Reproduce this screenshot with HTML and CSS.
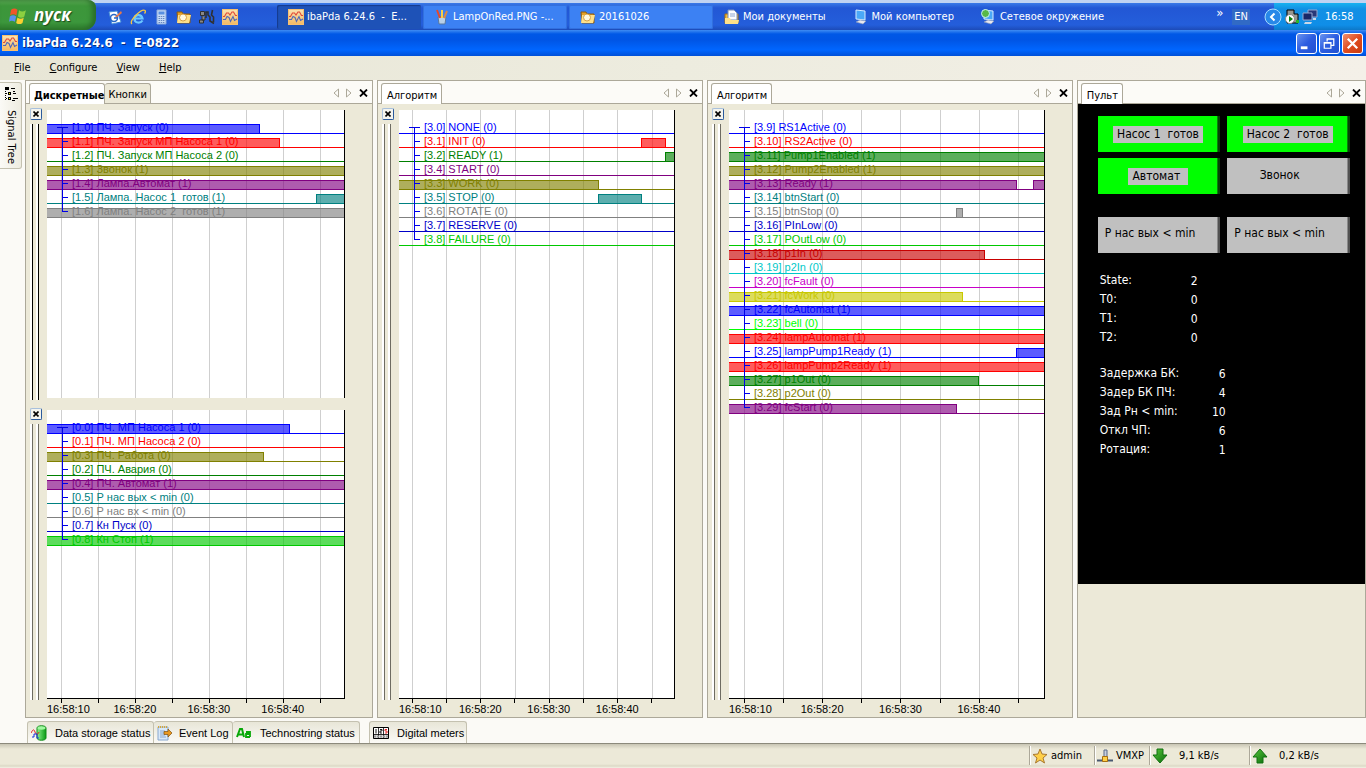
FILE: index.html
```html
<!DOCTYPE html>
<html lang="ru">
<head>
<meta charset="utf-8">
<title>ibaPda 6.24.6 - E-0822</title>
<link rel="stylesheet" href="styles.css">
</head>
<body>
<svg class="defs" aria-hidden="true">
  <defs>
    <linearGradient id="gold" x1="0" y1="0" x2="0" y2="1"><stop offset="0" stop-color="#fbe3b0"/><stop offset="1" stop-color="#f3b964"/></linearGradient>
    <linearGradient id="leaf" x1="0" y1="0" x2="1" y2="0"><stop offset="0" stop-color="#8cf08c"/><stop offset="1" stop-color="#0a9a14"/></linearGradient>
    <linearGradient id="arrow" x1="0" y1="0" x2="1" y2="1"><stop offset="0" stop-color="#58c83c"/><stop offset="1" stop-color="#0a6a0a"/></linearGradient>
  </defs>
  <symbol id="iba" viewBox="0 0 16 16"><rect x=".5" y=".5" width="15" height="15" fill="url(#gold)" stroke="#f8c070"/><path d="M1 7.500h1.500l2-3.500h2L8 6l2-3h1.500l2 3.500H15" fill="none" stroke="#e04838" stroke-width="1.100"/><path d="M1 10.500h2.500l1.500-3 2 1 1.500 4 2.500-5 1.500 4 2.500-1.500" fill="none" stroke="#5068b8" stroke-width="1.100"/></symbol>
  <symbol id="folder" viewBox="0 0 16 16"><path d="M1 3h5l1 2h7v9H2z" fill="#e8a020" stroke="#8a5a10"/><path d="M2 6h13l-2 8H1z" fill="#ffe08a"/><circle cx="7" cy="8.500" r="3.500" fill="#fff8e0" stroke="#d8a040"/></symbol>
  <symbol id="prev" viewBox="0 0 6 10"><path d="M5.500 1v8L1 5z" fill="none" stroke="#aca899"/></symbol>
  <symbol id="next" viewBox="0 0 6 10"><path d="M.5 1v8L5 5z" fill="none" stroke="#aca899"/></symbol>
  <symbol id="close" viewBox="0 0 9 8"><path d="M1 .5l7 7M8 .5l-7 7" stroke="#000" stroke-width="1.800"/></symbol>
  <symbol id="mini" viewBox="0 0 6 6"><path d="M.5.5l5 5M5.500.5l-5 5" stroke="#000" stroke-width="1.600"/></symbol>
  <symbol id="pc" viewBox="0 0 16 16"><path d="M3 1l9 1v9l-9-1z" fill="#4aa8f8" stroke="#d8ecff"/><path d="M3 13l4-2 6 1-3 3z" fill="#e8e8f0" stroke="#8898b8" stroke-width=".6"/></symbol>
</svg>

<header class="taskbar">
  <button class="start"><svg viewBox="0 0 18 18" width="19" height="19"><path d="M2 3.500c2-1.500 4-1.500 6 0L7 9C5 7.500 3 7.500 1 9z" fill="#f0562a"/><path d="M9.500 4c2 1.500 4 1.500 6.500 0l-1.500 6c-2 1.500-4 1.500-6 0z" fill="#8cd040"/><path d="M.8 10c2-1.500 4-1.500 6 0l-1.300 5c-2-1.500-4-1.500-5.500 0z" fill="#5a90f0"/><path d="M8 11c2 1.500 4 1.500 6 0l-1.200 5c-2 1.500-4 1.500-6 0z" fill="#fcd030"/></svg>пуск</button>
  <nav class="quick">
    <button aria-label="Desktop"><svg viewBox="0 0 16 16"><path d="M2 3l8-1 4 11-9 2z" fill="#fff" stroke="#4a90d8"/><circle cx="7" cy="9" r="3.500" fill="none" stroke="#2868c8" stroke-width="1.500"/><path d="M8 8l6-6 1 2-6 5z" fill="#e87848"/><path d="M7 9h3" stroke="#2868c8" stroke-width="1.500"/></svg></button>
    <button aria-label="Internet"><svg viewBox="0 0 16 16"><path d="M12.500 9.500H4.500c0-4 7-5 8 0zM4.500 9.500c0 5 6 5 8 2" fill="none" stroke="#6cc8ff" stroke-width="2.200"/><path d="M2 15C-2 12 12-1 15 1.500c1 1-.5 3-.5 3" fill="none" stroke="#f8c840" stroke-width="1.300"/></svg></button>
    <button aria-label="Calculator"><svg viewBox="0 0 16 16"><path d="M4 1h9v14H4z" fill="#c8dcf8" stroke="#8aa8d8"/><path d="M5.500 2.500h6v3h-6z" fill="#5a90e0"/><path d="M5.500 7.500h6M5.500 9.500h6M5.500 11.500h6M5.500 13.500h6" stroke="#6888c0" stroke-dasharray="1.500 .7"/></svg></button>
    <button aria-label="Search"><svg viewBox="0 0 16 16"><use href="#folder"/></svg></button>
    <button aria-label="Tools"><svg viewBox="0 0 16 16"><path d="M1.500 2.500h4v4h-4zM3 7v4h3V8M.5 11h4v3h-4z" fill="#888" stroke="#303030"/><path d="M7 9V3h2v3l2 2v4l4 2.500M13.500 1l-1 5 2 2v5" fill="none" stroke="#303030" stroke-width="1.600"/></svg></button>
    <button aria-label="ibaPda"><svg viewBox="0 0 16 16"><use href="#iba"/></svg></button>
  </nav>
  <div class="tasks">
    <button class="task on"><svg viewBox="0 0 16 16"><use href="#iba"/></svg>ibaPda 6.24.6&nbsp; -&nbsp; E...</button>
    <button class="task"><svg viewBox="0 0 16 16"><path d="M4 8h8l-1 7H5z" fill="#b8d0e8" stroke="#5878a0"/><path d="M6 9L3 1" stroke="#e84828" stroke-width="2"/><path d="M8 9V1" stroke="#f8d048" stroke-width="2"/><path d="M10 9l3-7" stroke="#d88848" stroke-width="2"/></svg>LampOnRed.PNG -...</button>
    <button class="task"><svg viewBox="0 0 16 16"><use href="#folder"/></svg>20161026</button>
  </div>
  <nav class="places">
    <a href="#docs"><svg viewBox="0 0 16 16"><path d="M1 5h13v9H1z" fill="#f0b838" stroke="#a87010"/><path d="M4 1h6l3 3v7H4z" fill="#fff" stroke="#7890b8"/><path d="M6 5h5M6 7h5" stroke="#90a8d0"/><path d="M1 9h5l1 2h8l-1 4H1z" fill="#ffe088"/></svg>Мои документы</a>
    <a href="#computer"><svg viewBox="0 0 16 16"><use href="#pc"/></svg>Мой компьютер</a>
    <a href="#network"><svg viewBox="0 0 16 16"><use href="#pc"/><circle cx="4.500" cy="4.500" r="4" fill="#58b848" stroke="#c8f0f8"/></svg>Сетевое окружение</a>
  </nav>
  <span class="more">»</span>
  <button class="lang">EN</button>
  <div class="tray">
    <button class="hide" aria-label="Hide icons"><svg viewBox="0 0 18 18"><circle cx="9" cy="9" r="8" fill="#2888e8" stroke="#a8dcff"/><path d="M10.500 5.500L7 9l3.500 3.500" fill="none" stroke="#fff" stroke-width="2"/></svg></button>
    <svg viewBox="0 0 16 16"><path d="M3 1h7v4h4v9H3z" fill="#989890" stroke="#000"/><circle cx="6" cy="10" r="4.500" fill="#fff" stroke="#888"/><path d="M5 7l4 3-4 3z" fill="#088008"/><path d="M12 11h3v3h-3z" fill="#28b828"/></svg>
    <svg viewBox="0 0 16 16"><path d="M6 1h9v7H6z" fill="#283878" stroke="#98a8d0"/><path d="M1 4h9v7H1z" fill="#182868" stroke="#98a8d0"/><path d="M3 13h7l-1 2H2zM11 9h3v2h-3z" fill="#c8d8e8"/></svg>
    <span class="clock">16:58</span>
  </div>
</header>

<div class="titlebar">
  <svg viewBox="0 0 16 16"><use href="#iba"/></svg>
  <h1>ibaPda 6.24.6&nbsp; -&nbsp; E-0822</h1>
  <div class="winbtns">
    <button aria-label="Minimize"><svg viewBox="0 0 20 20"><path d="M4 13h7v3H4z" fill="#fff"/></svg></button>
    <button aria-label="Restore"><svg viewBox="0 0 20 20"><path d="M7.500 8V5h7v7h-3M7 5.500h8" fill="none" stroke="#fff" stroke-width="1.300"/><path d="M4.500 9h7v6h-7zM4 9.500h8" fill="none" stroke="#fff" stroke-width="1.300"/></svg></button>
    <button class="x" aria-label="Close"><svg viewBox="0 0 20 20"><path d="M5 5l10 10M15 5L5 15" stroke="#fff" stroke-width="2.400"/></svg></button>
  </div>
</div>

<nav class="menu">
  <button><u>F</u>ile</button><button><u>C</u>onfigure</button><button><u>V</u>iew</button><button><u>H</u>elp</button>
</nav>

<main class="work">
  <aside class="side">
    <button class="tree"><svg viewBox="0 0 14 16"><path d="M1 1h4v3H1zM4 6h3v3H4zM4 11h3v3H4z" fill="#000"/><path d="M5 7h1v1H5zM5 12h1v1H5z" fill="#ff0"/><path d="M1.500 5v10M2 7.500h2M2 12.500h2" stroke="#000" stroke-dasharray="1 1"/><path d="M7 2.500h4M9 7.500h3M9 12.500h5M9 5.500h2M8 14.500h3" stroke="#000"/></svg>Signal Tree</button>
  </aside>

  <section class="panel p1">
    <header class="head">
      <button class="tab on">Дискретные</button><button class="tab">Кнопки</button>
      <div class="tools"><button aria-label="Previous"><svg class="ar" viewBox="0 0 6 10"><use href="#prev"/></svg></button><button aria-label="Next"><svg class="ar" viewBox="0 0 6 10"><use href="#next"/></svg></button><button aria-label="Close"><svg class="cl" viewBox="0 0 9 8"><use href="#close"/></svg></button></div>
    </header>
    <div class="body">
      <div class="pane dark">
        <div class="gutter"><button aria-label="Close graph"><svg viewBox="0 0 6 6"><use href="#mini"/></svg></button><i class="grip"></i></div>
        <div class="plot">
          <div class="grid"><i></i><i></i><i></i><i></i><i></i><i></i><i></i><i></i></div>
          <ul>
            <li class="blue"><span>[1.0] ПЧ. Запуск (0)</span><b style="left:0;width:71.8%"></b></li>
            <li class="red"><span>[1.1] ПЧ. Запуск МП Насоса 1 (0)</span><b style="left:0;width:78.4%"></b></li>
            <li class="green"><span>[1.2] ПЧ. Запуск МП Насоса 2 (0)</span></li>
            <li class="olive"><span>[1.3] Звонок (1)</span><b class="full"></b></li>
            <li class="purple"><span>[1.4] Лампа.Автомат (1)</span><b class="full"></b></li>
            <li class="teal"><span>[1.5] Лампа. Насос 1&nbsp; готов (1)</span><b style="left:90.6%;width:10%"></b></li>
            <li class="gray"><span>[1.6] Лампа. Насос 2&nbsp; готов (1)</span><b class="full"></b></li>
          </ul>
        </div>
      </div>
      <div class="pane last">
        <div class="gutter"><button aria-label="Close graph"><svg viewBox="0 0 6 6"><use href="#mini"/></svg></button><i class="grip"></i></div>
        <div class="plot">
          <div class="grid"><i></i><i></i><i></i><i></i><i></i><i></i><i></i><i></i></div>
          <ul>
            <li class="blue"><span>[0.0] ПЧ. МП Насоса 1 (0)</span><b style="left:0;width:81.8%"></b></li>
            <li class="red"><span>[0.1] ПЧ. МП Насоса 2 (0)</span></li>
            <li class="olive"><span>[0.3] ПЧ. Работа (0)</span><b style="left:0;width:73%"></b></li>
            <li class="green"><span>[0.2] ПЧ. Авария (0)</span></li>
            <li class="purple"><span>[0.4] ПЧ. Автомат (1)</span><b class="full"></b></li>
            <li class="teal"><span>[0.5] Р нас вых &lt; min (0)</span></li>
            <li class="gray"><span>[0.6] Р нас вх &lt; min (0)</span></li>
            <li class="navy"><span>[0.7] Кн Пуск (0)</span></li>
            <li class="lime"><span>[0.8] Кн Стоп (1)</span><b class="full"></b></li>
          </ul>
        </div>
      </div>
      <div class="axis"><div class="ticks"><i></i><i></i><i></i><i></i><i></i><i></i><i></i><i></i></div><div class="times"><span>16:58:10</span><span>16:58:20</span><span>16:58:30</span><span>16:58:40</span></div></div>
    </div>
  </section>

  <section class="panel p2">
    <header class="head">
      <button class="tab on plain">Алгоритм</button>
      <div class="tools"><button aria-label="Previous"><svg class="ar" viewBox="0 0 6 10"><use href="#prev"/></svg></button><button aria-label="Next"><svg class="ar" viewBox="0 0 6 10"><use href="#next"/></svg></button><button aria-label="Close"><svg class="cl" viewBox="0 0 9 8"><use href="#close"/></svg></button></div>
    </header>
    <div class="body">
      <div class="pane last">
        <div class="gutter"><button aria-label="Close graph"><svg viewBox="0 0 6 6"><use href="#mini"/></svg></button><i class="grip"></i></div>
        <div class="plot">
          <div class="grid"><i></i><i></i><i></i><i></i><i></i><i></i><i></i><i></i></div>
          <ul>
            <li class="blue"><span>[3.0] NONE (0)</span></li>
            <li class="red"><span>[3.1] INIT (0)</span><b style="left:88%;width:9.200%"></b></li>
            <li class="green"><span>[3.2] READY (1)</span><b style="left:96.8%;width:4%"></b></li>
            <li class="purple"><span>[3.4] START (0)</span></li>
            <li class="olive"><span>[3.3] WORK (0)</span><b style="left:0;width:72.6%"></b></li>
            <li class="teal"><span>[3.5] STOP (0)</span><b style="left:72.4%;width:16%"></b></li>
            <li class="gray"><span>[3.6] ROTATE (0)</span></li>
            <li class="navy"><span>[3.7] RESERVE (0)</span></li>
            <li class="lime"><span>[3.8] FAILURE (0)</span></li>
          </ul>
        </div>
      </div>
      <div class="axis"><div class="ticks"><i></i><i></i><i></i><i></i><i></i><i></i><i></i><i></i></div><div class="times"><span>16:58:10</span><span>16:58:20</span><span>16:58:30</span><span>16:58:40</span></div></div>
    </div>
  </section>

  <section class="panel p3">
    <header class="head">
      <button class="tab on plain">Алгоритм</button>
      <div class="tools"><button aria-label="Previous"><svg class="ar" viewBox="0 0 6 10"><use href="#prev"/></svg></button><button aria-label="Next"><svg class="ar" viewBox="0 0 6 10"><use href="#next"/></svg></button><button aria-label="Close"><svg class="cl" viewBox="0 0 9 8"><use href="#close"/></svg></button></div>
    </header>
    <div class="body">
      <div class="pane last">
        <div class="gutter"><button aria-label="Close graph"><svg viewBox="0 0 6 6"><use href="#mini"/></svg></button><i class="grip"></i></div>
        <div class="plot">
          <div class="grid"><i></i><i></i><i></i><i></i><i></i><i></i><i></i><i></i></div>
          <ul>
            <li class="blue"><span>[3.9] RS1Active (0)</span></li>
            <li class="red"><span>[3.10] RS2Active (0)</span></li>
            <li class="green"><span>[3.11] Pump1Enabled (1)</span><b class="full"></b></li>
            <li class="olive"><span>[3.12] Pump2Enabled (1)</span><b class="full"></b></li>
            <li class="purple"><span>[3.13] Ready (1)</span><b style="left:0;width:91.4%"></b><b style="left:96.5%;width:4%"></b></li>
            <li class="teal"><span>[3.14] btnStart (0)</span></li>
            <li class="gray"><span>[3.15] btnStop (0)</span><b style="left:72%;width:2.200%"></b></li>
            <li class="navy"><span>[3.16] PInLow (0)</span></li>
            <li class="lime"><span>[3.17] POutLow (0)</span></li>
            <li class="crimson"><span>[3.18] p1In (0)</span><b style="left:0;width:81.3%"></b></li>
            <li class="cyan"><span>[3.19] p2In (0)</span></li>
            <li class="magenta"><span>[3.20] fcFault (0)</span></li>
            <li class="yellow"><span>[3.21] fcWork (0)</span><b style="left:0;width:74.3%"></b></li>
            <li class="blue"><span>[3.22] fcAutomat (1)</span><b class="full"></b></li>
            <li class="bright"><span>[3.23] bell (0)</span></li>
            <li class="red"><span>[3.24] lampAutomat (1)</span><b class="full"></b></li>
            <li class="blue"><span>[3.25] lampPump1Ready (1)</span><b style="left:91.1%;width:10%"></b></li>
            <li class="red"><span>[3.26] lampPump2Ready (1)</span><b class="full"></b></li>
            <li class="green"><span>[3.27] p1Out (0)</span><b style="left:0;width:79.4%"></b></li>
            <li class="olive"><span>[3.28] p2Out (0)</span></li>
            <li class="purple"><span>[3.29] fcStart (0)</span><b style="left:0;width:72.4%"></b></li>
          </ul>
        </div>
      </div>
      <div class="axis"><div class="ticks"><i></i><i></i><i></i><i></i><i></i><i></i><i></i><i></i></div><div class="times"><span>16:58:10</span><span>16:58:20</span><span>16:58:30</span><span>16:58:40</span></div></div>
    </div>
  </section>

  <section class="panel p4">
    <header class="head">
      <button class="tab on plain">Пульт</button>
      <div class="tools"><button aria-label="Previous"><svg class="ar" viewBox="0 0 6 10"><use href="#prev"/></svg></button><button aria-label="Next"><svg class="ar" viewBox="0 0 6 10"><use href="#next"/></svg></button><button aria-label="Close"><svg class="cl" viewBox="0 0 9 8"><use href="#close"/></svg></button></div>
    </header>
    <div class="console">
      <div class="lamps">
        <div class="lamp lit"><span>Насос 1&nbsp; готов</span></div>
        <div class="lamp lit"><span>Насос 2&nbsp; готов</span></div>
        <div class="lamp lit"><span>Автомат&nbsp;</span></div>
        <div class="lamp"><span>Звонок</span></div>
      </div>
      <div class="lamps low">
        <div class="lamp"><span>Р нас вых &lt; min</span></div>
        <div class="lamp"><span>Р нас вых &lt; min</span></div>
      </div>
      <table class="vals">
        <tr><th>State:</th><td>2</td></tr><tr><th>T0:</th><td>0</td></tr><tr><th>T1:</th><td>0</td></tr><tr><th>T2:</th><td>0</td></tr>
      </table>
      <table class="vals wide">
        <tr><th>Задержка БК:</th><td>6</td></tr><tr><th>Задер БК ПЧ:</th><td>4</td></tr><tr><th>Зад Рн &lt; min:</th><td>10</td></tr><tr><th>Откл ЧП:</th><td>6</td></tr><tr><th>Ротация:</th><td>1</td></tr>
      </table>
    </div>
  </section>
</main>

<nav class="dock">
  <button><svg viewBox="0 0 16 16"><path d="M6 3v10c0 3 9 3 9 0V3c0-3-9-3-9 0z" fill="url(#leaf)" stroke="#108a18"/><ellipse cx="10.500" cy="3" rx="4" ry="1.700" fill="#a0f8a0"/><path d="M0 8c2-4 3-4 4-1s3 3 4 0" fill="none" stroke="#e02020"/><path d="M1 12h2V9h3v4h2" fill="none" stroke="#1830e0"/></svg>Data storage status</button>
  <button><svg viewBox="0 0 16 16"><path d="M1 2h10v13H1z" fill="#d8e8f8" stroke="#88a8d0"/><path d="M1 2h10" stroke="#d8a838" stroke-width="2" stroke-dasharray="1 1"/><path d="M3 6h5M3 8h4M3 10h5M3 12h6" stroke="#88a8d0"/><path d="M11 4l4 4-4 4V9.500H7v-3h4z" fill="#e89820" stroke="#805010" stroke-width=".7"/></svg>Event Log</button>
  <button><svg viewBox="0 0 16 16"><path d="M1 12l3-8h2l2 8M2 9.500h5" fill="none" stroke="#08a808" stroke-width="2"/><path d="M10 7h4v5M14 9h-4v3h4" fill="none" stroke="#08a808" stroke-width="1.800"/></svg>Technostring status</button>
  <button><svg viewBox="0 0 16 16"><path d="M.5 2.500h15v11H.5z" fill="#d8d8d8" stroke="#000"/><path d="M1 3h14v6H1z" fill="#fff"/><path d="M.5 9.500h15M5.500 2v12M10.500 2v12" stroke="#000" stroke-width=".8"/><path d="M3 4v4.500M7 4.500h2v1.500H7v2h2" fill="none" stroke="#000" stroke-width=".9"/><path d="M14 4.500h-2v1.500h2v2h-2" fill="none" stroke="#e01010" stroke-width=".9"/><path d="M1 11.500h14" stroke="#999" stroke-width="2" stroke-dasharray="2 1"/></svg>Digital meters</button>
</nav>

<footer class="status">
  <span class="s1"><svg viewBox="0 0 16 16"><path d="M8 1l2 5 5 .5-4 3.500 1.500 5L8 12l-4.500 3L5 10 1 6.500 6 6z" fill="#ffd048" stroke="#a87830"/></svg>admin</span>
  <span class="s2"><svg viewBox="0 0 16 16"><path d="M7 2h3v7H7z" fill="#c8d0e0" stroke="#586888"/><path d="M0 12.500h16" stroke="#485870" stroke-width="2"/><path d="M5.500 8.500h5v5h-5z" fill="#ffd048" stroke="#a87010"/></svg>VMXP</span>
  <span class="s3"><svg viewBox="0 0 16 16"><path d="M5 1h6v6h4l-7 8-7-8h4z" fill="url(#arrow)" stroke="#107010"/></svg>9,1 kB/s</span>
  <span class="s4"><svg viewBox="0 0 16 16"><path d="M5 15h6V9h4L8 1 1 9h4z" fill="url(#arrow)" stroke="#107010"/></svg>0,2 kB/s</span>
</footer>
</body>
</html>
```

FILE: styles.css
```css
* { box-sizing: border-box; }
body {
  margin: 0;
  min-height: 100vh;
  display: flex;
  flex-direction: column;
  background: #fbfaf6;
  color: #000;
  font: 11px/14px "DejaVu Sans Condensed", "DejaVu Sans", sans-serif;
}
button { font: inherit; color: inherit; border: 0; padding: 0; margin: 0; background: none; white-space: nowrap; }
svg { display: block; flex: none; }
.defs { position: absolute; width: 0; height: 0; }

/* Taskbar */
.taskbar {
  height: 30px;
  display: flex;
  align-items: center;
  color: #fff;
  border-top: 3px solid #c0d3f2;
  background: linear-gradient(#3a7ae8, #2257d5 5px, #245edb 22px, #1c4bb8);
}
.taskbar svg { width: 16px; height: 16px; }
.start {
  width: 96px;
  height: 30px;
  margin-top: -3px;
  padding-left: 9px;
  display: flex;
  align-items: center;
  gap: 6px;
  border-radius: 0 8px 12px 0;
  background: linear-gradient(#5eac56, #3c963a 6px, #3c973c 22px, #2c7a2c);
  box-shadow: inset -4px 0 5px #2a6e2a;
  font: italic bold 17px/20px "Open Sans", sans-serif;
  text-shadow: 1px 1px 1px #1c4a1c;
}
.taskbar .start svg { width: 19px; height: 19px; }
.quick { display: flex; gap: 7px; padding-left: 11px; }
.tasks { display: flex; gap: 2px; margin-left: 39px; }
.task {
  width: 144px;
  height: 24px;
  padding-left: 11px;
  display: flex;
  align-items: center;
  gap: 3px;
  border-radius: 2px;
  background: #3c81f3;
  box-shadow: inset 0 0 0 1px #3270de;
}
.task.on { background: #1e52b7; box-shadow: inset 1px 1px 1px #143a8c; }
.places { display: flex; gap: 27px; margin-left: 11px; }
.places a { display: flex; align-items: center; gap: 3px; color: #fff; text-decoration: none; white-space: nowrap; }
.more { margin-left: auto; padding-bottom: 8px; font-size: 13px; }
.lang { margin-left: 9px; padding: 0 2px; height: 16px; background: #316ac5; }
.tray {
  height: 27px;
  width: 92px;
  margin-left: 24px;
  display: flex;
  align-items: center;
  gap: 2px;
  background: linear-gradient(#18b2f0, #1290e4 6px, #0f8ee8 22px, #0d78c8);
}
.hide { margin-left: -10px; }
.tray .hide svg { width: 18px; height: 18px; }
.clock { margin-left: 5px; }

/* Window title */
.titlebar {
  height: 26px;
  padding: 0 3px 0 2px;
  display: flex;
  align-items: center;
  color: #fff;
  background: linear-gradient(#3f8cf3, #0058e6 4px, #0055e5 10px, #0066ff 20px, #0050d8);
}
.titlebar > svg { width: 16px; height: 16px; }
.titlebar h1 { margin: 0 0 0 4px; font: bold 13px/20px "DejaVu Sans Condensed", sans-serif; text-shadow: 1px 1px 0 #0a2a80; }
.winbtns { margin-left: auto; display: flex; gap: 2px; }
.winbtns button { width: 21px; height: 21px; border: 1px solid #fff; border-radius: 3px; background: linear-gradient(135deg, #6a94f0, #2c5ce0 50%, #2050d0); }
.winbtns .x { background: linear-gradient(135deg, #f09070, #e04c20 50%, #c83c10); }
.winbtns svg { width: 19px; height: 19px; }

.menu {
  height: 24px;
  padding-left: 14px;
  display: flex;
  align-items: center;
  gap: 19px;
  background: linear-gradient(to right, #e8e6d6, #edecdf 50%, #f4f0e8);
}

/* Work area */
.work { flex: 1; display: flex; }
.side { width: 25px; padding-top: 2px; flex: none; }
.tree {
  width: 22px;
  height: 87px;
  padding: 3px 0 0 0;
  display: flex;
  align-items: center;
  gap: 8px;
  writing-mode: vertical-rl;
  border: 1px solid #c4c1b0;
  border-left: 0;
  border-radius: 0 3px 3px 0;
  background: linear-gradient(to right, #fbfaf6, #eeece0);
}
.tree svg { width: 14px; height: 16px; }
.panel { display: flex; flex-direction: column; min-width: 0; border: 1px solid #aca899; background: #ece9d8; margin-left: 4px; flex: 1 1 0; }
.p1 { flex-grow: 348; margin-left: 0; }
.p2 { flex-grow: 326; }
.p3 { flex-grow: 366; }
.p4 { flex-grow: 289; }
.head { height: 23px; padding: 2px 4px 0 3px; display: flex; background: #fcfbf7; border-bottom: 1px solid #aca899; }
.tab { height: 20px; padding: 3px 3px 0; border: 1px solid #aca899; border-bottom: 0; border-left: 0; border-radius: 3px 3px 0 0; background: #ece9d8; }
.tab.on { height: 21px; padding-left: 4px; padding-right: 0; border-left: 1px solid #aca899; background: #fff; font-weight: bold; }
.tab.plain { padding: 3px 4px 0 5px; font-weight: normal; }
.tools { margin-left: auto; display: flex; align-items: center; gap: 7px; }
.ar { width: 6px; height: 10px; }
.cl { width: 9px; height: 8px; }

/* Charts */
.body { flex: 1; display: flex; flex-direction: column; padding-top: 4px; }
.pane { flex: 1 1 0; display: flex; padding-right: 27px; }
.pane + .pane { margin-top: 8px; }
.gutter { width: 21px; padding-left: 4px; display: flex; flex-direction: column; flex: none; }
.gutter button { width: 12px; height: 12px; padding: 2px; border: 1px solid #2a5a9c; border-top-color: #a8c0dc; border-left-color: #a8c0dc; border-radius: 2px; background: #f4f4ee; }
.gutter svg { width: 6px; height: 6px; }
.grip { flex: 1; width: 7px; margin: 4px 0 0 2px; border: solid #6e6c62; border-width: 0 1px; position: relative; background: linear-gradient(to right, #ece9d8 3px, #fff 3px); }
.grip::before { content: ""; position: absolute; left: -3px; top: 0; bottom: 0; width: 2px; background: #fff; }
.dark .grip { border-color: #000; }
.plot { flex: 1; min-width: 0; margin: 2px 0; position: relative; overflow: hidden; background: #fff; border-right: 1px solid #000; }
.last .plot { margin-bottom: 1px; border-bottom: 1px solid #000; }
.grid, .ticks { display: grid; grid-template-columns: repeat(8, 1fr); width: 99.6%; }
.grid { position: absolute; left: 4.7%; top: 0; bottom: 0; }
.grid i { border-left: 1px solid #cfcfcf; }
.plot ul { position: relative; list-style: none; margin: 0; padding: 10px 0 0; font: 11px/14px "Liberation Sans", Arial, sans-serif; }
.plot ul::before { content: ""; position: absolute; left: 15px; top: 17px; bottom: 6px; border-left: 1px solid #0000e8; z-index: 2; }
.plot li { height: 14px; position: relative; padding-left: 25px; border-bottom: 1px solid; white-space: nowrap; }
.plot li::before { content: ""; position: absolute; left: 15px; top: 7px; width: 6px; border-top: 1px solid #0000e8; z-index: 2; }
.plot li:first-child::before { left: 10px; width: 11px; }
.plot b { position: absolute; bottom: -1px; height: 10px; border: 1px solid; }
.plot b::before { content: ""; position: absolute; inset: 0; background: currentColor; opacity: .64; }
.plot b[style^="left:0"] { border-left: 0; }
.plot .full { left: 0; right: 0; border-width: 1px 0; }
.blue { color: #00f; }
.red { color: #f00; }
.green { color: #008000; }
.olive { color: #808000; }
.purple { color: #800080; }
.teal { color: #008080; }
.gray { color: #808080; }
.navy { color: #0000c8; }
.lime { color: #00c800; }
.crimson { color: #c80000; }
.cyan { color: #00c8c8; }
.magenta { color: #c800c8; }
.yellow { color: #c8c800; }
.bright { color: #0f0; }

.axis { height: 18px; margin: -1px 28px 0 21px; position: relative; }
.ticks { margin-left: 4.7%; height: 4px; overflow: hidden; width: 95.3%; grid-template-columns: repeat(8, 13.06%); }
.ticks i { border-left: 1px solid #000; }
.times { display: grid; grid-template-columns: 17.15% repeat(3, 24.9%); font: 11px/12px "Liberation Sans", Arial, sans-serif; text-align: center; }
.times span:first-child { text-align: left; }

/* Console */
.console { min-height: 480px; padding: 12px 15px 0 20px; background: #000; font-size: 12px; line-height: 15px; }
.lamps { display: grid; grid-template-columns: 1fr 1fr; gap: 6px 7px; }
.lamps.low { margin-top: 23px; }
.lamp { height: 36px; padding-bottom: 2px; display: flex; align-items: center; justify-content: center; background: #c0c0c0; border-right: 2px solid #505050; box-shadow: inset -1px 0 #888; }
.lamp:not(.lit) { padding-right: 16px; }
.lit { padding-bottom: 0; background: #0f0; border-right-color: #064006; box-shadow: inset -1px 0 #0a800a; }
.lamp span { padding: 0 4px; background: #c0c0c0; white-space: nowrap; }
.lit span { padding: 1px 4px; }
.low .lamp { justify-content: flex-start; padding: 0 0 4px 3px; }
.vals { border-collapse: collapse; margin: 18px 0 0 2px; width: 98px; color: #fff; }
.vals.wide { margin-top: 17px; width: 126px; }
.vals th { padding: 0; height: 19px; font-weight: normal; text-align: left; white-space: nowrap; }
.vals td { padding: 1px 0 0; text-align: right; }

/* Bottom */
.dock { height: 26px; padding: 3px 0 0 27px; display: flex; border-bottom: 1px solid #8c8a7c; }
.dock button { height: 22px; width: 127px; padding-left: 3px; display: flex; align-items: center; gap: 8px; border: 1px solid #c4c1b0; border-bottom: 0; border-left-width: 0; border-radius: 3px 3px 0 0; background: linear-gradient(#e8e6d8, #fbfaf6); font: 11px/14px "Liberation Sans", Arial, sans-serif; }
.dock button:first-child { border-left-width: 1px; }
.dock button:nth-child(2) { width: 79px; gap: 6px; }
.dock button:last-child { width: 98px; margin-left: 9px; border-left-width: 1px; }
.dock svg { width: 16px; height: 16px; }
.status { height: 24px; display: flex; justify-content: flex-end; background: linear-gradient(#c8c5b4, #ece9d8 5px, #ece9d8 20px, #dcd9c6 22px, #f4f2e6); }
.status span { display: flex; align-items: center; gap: 3px; margin: 2px 0 3px; padding-left: 2px; border-left: 1px solid #aca899; white-space: nowrap; box-shadow: inset 1px 0 #fff; }
.status svg { width: 16px; height: 16px; }
.status .s1 { width: 65px; }
.status .s2 { width: 55px; }
.status .s3 { width: 100px; gap: 11px; }
.status .s4 { width: 117px; gap: 11px; }
```
